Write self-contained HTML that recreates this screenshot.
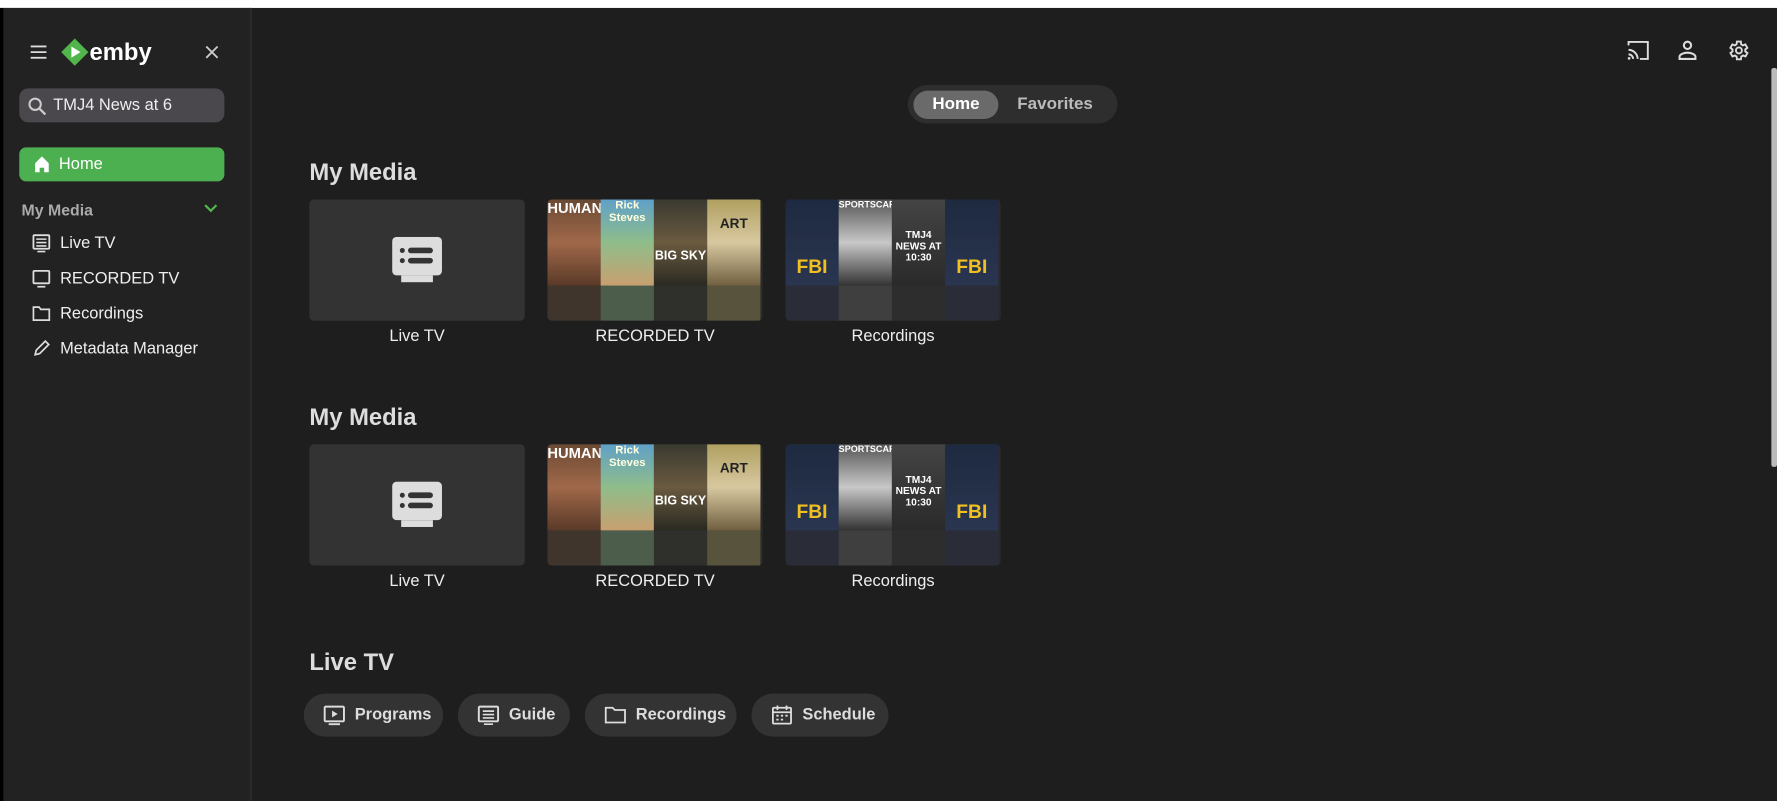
<!DOCTYPE html>
<html><head><meta charset="utf-8"><style>
*{box-sizing:border-box;margin:0;padding:0}
html,body{width:1777px;height:795px;overflow:hidden;background:#1e1e1e;font-family:"Liberation Sans",sans-serif;color:#eee}
#w{position:absolute;left:0;top:0;width:1568px;height:702px;transform:scale(1.1333);transform-origin:0 0;background:#1e1e1e}
.a{position:absolute}
.side{left:3px;top:7px;width:219px;height:700px;background:#222;border-right:1px solid #333}
.item{position:absolute;left:28px;font-size:14.5px;color:#eee;display:flex;align-items:center;gap:8px}
.item svg{width:17px;height:17px}
.card{position:absolute;width:190px;height:107px;border-radius:4px;background:#333;overflow:hidden}
.lbl{position:absolute;width:190px;text-align:center;font-size:14.5px;color:#eee}
h2{position:absolute;font-size:21px;font-weight:bold;color:#ddd}
.p{position:absolute;top:0;width:47px;height:76px;overflow:hidden;font-weight:bold;text-align:center}
.r{position:absolute;top:76px;width:47px;height:31px;opacity:.35}
.btn{position:absolute;top:612px;height:38px;border-radius:19px;background:#333;display:flex;align-items:center;gap:8px;padding-left:17px;font-size:14.5px;font-weight:bold;color:#ddd}
.btn svg{width:20px;height:20px}
</style></head><body><div id="w">
<div class="a" style="left:0;top:0;width:1568px;height:7px;background:#fff"></div>
<div class="a" style="left:0;top:7px;width:3px;height:700px;background:#000"></div>
<div class="a side"></div>
<div class="a" style="left:1563px;top:60px;width:5px;height:352px;background:#bbb;border-radius:2px"></div>
<svg class="a" style="left:27px;top:40px" width="14" height="12" viewBox="0 0 14 12"><path d="M0 1h14M0 6h14M0 11h14" stroke="#ddd" stroke-width="1.6"/></svg>
<svg class="a" style="left:53px;top:33px" width="26" height="26" viewBox="0 0 26 26"><path d="M13 1L25 13 13 25 1 13z" fill="#52b54b"/><path d="M10 8l8 5-8 5z" fill="#fff"/></svg>
<div class="a" style="left:79px;top:35px;font-size:21px;font-weight:bold;color:#fff">emby</div>
<svg class="a" style="left:181px;top:40px" width="12" height="12" viewBox="0 0 12 12"><path d="M1 1l10 10M11 1L1 11" stroke="#ccc" stroke-width="1.6"/></svg>
<div class="a" style="left:17px;top:78px;width:181px;height:30px;border-radius:8px;background:#4a474d"></div>
<svg class="a" style="left:24px;top:85px" width="17" height="17" viewBox="0 0 17 17"><circle cx="7" cy="7" r="5" stroke="#ccc" stroke-width="1.8" fill="none"/><path d="M11 11l5 5" stroke="#ccc" stroke-width="2"/></svg>
<div class="a" style="left:47px;top:85px;font-size:14.5px;color:#eee">TMJ4 News at 6</div>
<div class="a" style="left:17px;top:130px;width:181px;height:30px;border-radius:6px;background:#4caf50"></div>
<svg class="a" style="left:29px;top:137px" width="16" height="16" viewBox="0 0 16 16"><path d="M2 7L8 1l6 6v8h-4v-4H6v4H2z" fill="#fff"/></svg>
<div class="a" style="left:52px;top:137px;font-size:14.5px;color:#fff">Home</div>
<div class="a" style="left:19px;top:177px;font-size:14px;font-weight:bold;color:#aaa">My Media</div>
<svg class="a" style="left:180px;top:179px" width="12" height="9" viewBox="0 0 12 9"><path d="M1 2l5 5 5-5" stroke="#52b54b" stroke-width="2" fill="none"/></svg>
<div class="item" style="top:206px"><svg viewBox="0 0 17 17"><rect x="1.5" y="1.5" width="14" height="12" rx="1" stroke="#ddd" stroke-width="1.6" fill="none"/><path d="M4 5h9M4 8h9M4 11h9M5 16h7" stroke="#ddd" stroke-width="1.4"/></svg>Live TV</div>
<div class="item" style="top:237px"><svg viewBox="0 0 17 17"><rect x="1.5" y="2" width="14" height="11" rx="1" stroke="#ddd" stroke-width="1.6" fill="none"/><path d="M5 16h7" stroke="#ddd" stroke-width="1.6"/></svg>RECORDED TV</div>
<div class="item" style="top:268px"><svg viewBox="0 0 17 17"><path d="M1.5 3h5l1.5 2h7.5v9.5h-14z" stroke="#ddd" stroke-width="1.5" fill="none"/></svg>Recordings</div>
<div class="item" style="top:299px"><svg viewBox="0 0 17 17"><path d="M3 14l1-4 8-8 3 3-8 8z" stroke="#ddd" stroke-width="1.5" fill="none"/></svg>Metadata Manager</div>
<svg class="a" style="left:1435px;top:35px" width="21" height="19" viewBox="0 0 21 19"><path d="M2 5V2h17v15h-7M2 9a8 8 0 0 1 8 8M2 13a4 4 0 0 1 4 4" stroke="#ddd" stroke-width="1.7" fill="none"/><circle cx="2.5" cy="16.5" r="1.2" fill="#ddd"/></svg>
<svg class="a" style="left:1480px;top:35px" width="18" height="19" viewBox="0 0 18 19"><circle cx="9" cy="5" r="3.2" stroke="#ddd" stroke-width="1.8" fill="none"/><path d="M2 17v-2c0-2 4-3.5 7-3.5s7 1.5 7 3.5v2z" stroke="#ddd" stroke-width="1.8" fill="none"/></svg>
<svg class="a" style="left:1523px;top:34px" width="21" height="21" viewBox="0 0 24 24"><path d="M19.4 13a7.5 7.5 0 0 0 0-2l2.1-1.6-2-3.5-2.5 1a7 7 0 0 0-1.7-1L15 3h-4l-.4 2.9a7 7 0 0 0-1.7 1l-2.5-1-2 3.5L6.6 11a7.5 7.5 0 0 0 0 2l-2.1 1.6 2 3.5 2.5-1a7 7 0 0 0 1.7 1L11 21h4l.4-2.9a7 7 0 0 0 1.7-1l2.5 1 2-3.5z" fill="none" stroke="#ddd" stroke-width="1.9"/><circle cx="13" cy="12" r="3" fill="none" stroke="#ddd" stroke-width="1.9"/></svg>
<div class="a" style="left:801px;top:75px;width:185px;height:34px;border-radius:17px;background:#2e2e2e"></div>
<div class="a" style="left:806px;top:80px;width:75px;height:25px;border-radius:13px;background:#6a6a6a"></div>
<div class="a" style="left:806px;top:83px;width:75px;text-align:center;font-size:15px;font-weight:bold;color:#fff">Home</div>
<div class="a" style="left:886px;top:83px;width:90px;text-align:center;font-size:15px;font-weight:bold;color:#bbb">Favorites</div>

<h2 style="left:273px;top:141px">My Media</h2>
<h2 style="left:273px;top:357px">My Media</h2>
<h2 style="left:273px;top:573px">Live TV</h2>

<div class="card" style="left:273px;top:176px"><svg class="a" style="left:73px;top:33px" width="44" height="42" viewBox="0 0 44 42"><rect x="0" y="0" width="44" height="34" rx="4" fill="#ddd"/><rect x="8" y="34" width="28" height="6" fill="#ddd"/><circle cx="9" cy="12" r="2.2" fill="#333"/><circle cx="9" cy="21" r="2.2" fill="#333"/><rect x="14" y="9.5" width="22" height="5" rx="2.5" fill="#333"/><rect x="14" y="18.5" width="22" height="5" rx="2.5" fill="#333"/></svg></div>
<div class="card" style="left:483px;top:176px;background:#2a2a2a">
<div class="p" style="left:0;background:linear-gradient(#6b4a33,#a0684a 50%,#5a3a28);color:#fff;font-size:13px">HUMAN</div>
<div class="p" style="left:47px;background:linear-gradient(#5fa0c8,#8fbd8a 50%,#c8a070);color:#ffd;font-size:10px">Rick Steves</div>
<div class="p" style="left:94px;background:linear-gradient(#3a3a30,#6a5a40 50%,#2a2a22);color:#fff;font-size:11px;padding-top:44px">BIG SKY</div>
<div class="p" style="left:141px;background:linear-gradient(#b0a060,#d8c8a0 50%,#706040);color:#222;font-size:12px;padding-top:14px">ART</div>
<div class="r" style="left:0;background:#6b4a33"></div><div class="r" style="left:47px;background:#8fbd8a"></div><div class="r" style="left:94px;background:#3a3a30"></div><div class="r" style="left:141px;background:#b0a060"></div></div>
<div class="card" style="left:693px;top:176px;background:#2a2a2a">
<div class="p" style="left:0;background:linear-gradient(#1e2a40,#2a3550);color:#f0c020;font-size:17px;padding-top:50px">FBI</div>
<div class="p" style="left:47px;background:linear-gradient(#555,#c8c8c8 50%,#333);color:#fff;font-size:8px">SPORTSCAR</div>
<div class="p" style="left:94px;background:linear-gradient(#444,#2a2a2a);color:#fff;font-size:9px;padding-top:26px">TMJ4 NEWS AT 10:30</div>
<div class="p" style="left:141px;background:linear-gradient(#1e2a40,#2a3550);color:#f0c020;font-size:17px;padding-top:50px">FBI</div>
<div class="r" style="left:0;background:#2a3550"></div><div class="r" style="left:47px;background:#666"></div><div class="r" style="left:94px;background:#333"></div><div class="r" style="left:141px;background:#2a3550"></div></div>
<div class="lbl" style="left:273px;top:289px">Live TV</div>
<div class="lbl" style="left:483px;top:289px">RECORDED TV</div>
<div class="lbl" style="left:693px;top:289px">Recordings</div>

<div class="card" style="left:273px;top:392px"><svg class="a" style="left:73px;top:33px" width="44" height="42" viewBox="0 0 44 42"><rect x="0" y="0" width="44" height="34" rx="4" fill="#ddd"/><rect x="8" y="34" width="28" height="6" fill="#ddd"/><circle cx="9" cy="12" r="2.2" fill="#333"/><circle cx="9" cy="21" r="2.2" fill="#333"/><rect x="14" y="9.5" width="22" height="5" rx="2.5" fill="#333"/><rect x="14" y="18.5" width="22" height="5" rx="2.5" fill="#333"/></svg></div>
<div class="card" style="left:483px;top:392px;background:#2a2a2a">
<div class="p" style="left:0;background:linear-gradient(#6b4a33,#a0684a 50%,#5a3a28);color:#fff;font-size:13px">HUMAN</div>
<div class="p" style="left:47px;background:linear-gradient(#5fa0c8,#8fbd8a 50%,#c8a070);color:#ffd;font-size:10px">Rick Steves</div>
<div class="p" style="left:94px;background:linear-gradient(#3a3a30,#6a5a40 50%,#2a2a22);color:#fff;font-size:11px;padding-top:44px">BIG SKY</div>
<div class="p" style="left:141px;background:linear-gradient(#b0a060,#d8c8a0 50%,#706040);color:#222;font-size:12px;padding-top:14px">ART</div>
<div class="r" style="left:0;background:#6b4a33"></div><div class="r" style="left:47px;background:#8fbd8a"></div><div class="r" style="left:94px;background:#3a3a30"></div><div class="r" style="left:141px;background:#b0a060"></div></div>
<div class="card" style="left:693px;top:392px;background:#2a2a2a">
<div class="p" style="left:0;background:linear-gradient(#1e2a40,#2a3550);color:#f0c020;font-size:17px;padding-top:50px">FBI</div>
<div class="p" style="left:47px;background:linear-gradient(#555,#c8c8c8 50%,#333);color:#fff;font-size:8px">SPORTSCAR</div>
<div class="p" style="left:94px;background:linear-gradient(#444,#2a2a2a);color:#fff;font-size:9px;padding-top:26px">TMJ4 NEWS AT 10:30</div>
<div class="p" style="left:141px;background:linear-gradient(#1e2a40,#2a3550);color:#f0c020;font-size:17px;padding-top:50px">FBI</div>
<div class="r" style="left:0;background:#2a3550"></div><div class="r" style="left:47px;background:#666"></div><div class="r" style="left:94px;background:#333"></div><div class="r" style="left:141px;background:#2a3550"></div></div>
<div class="lbl" style="left:273px;top:505px">Live TV</div>
<div class="lbl" style="left:483px;top:505px">RECORDED TV</div>
<div class="lbl" style="left:693px;top:505px">Recordings</div>

<div class="btn" style="left:268px;width:123px"><svg viewBox="0 0 20 20"><rect x="1.5" y="2.5" width="17" height="13" rx="1" stroke="#ddd" stroke-width="1.7" fill="none"/><path d="M8 6l5 3-5 3z" fill="#ddd"/><path d="M5 18h10" stroke="#ddd" stroke-width="1.7"/></svg>Programs</div>
<div class="btn" style="left:404px;width:99px"><svg viewBox="0 0 20 20"><rect x="1.5" y="2.5" width="17" height="13" rx="1" stroke="#ddd" stroke-width="1.7" fill="none"/><path d="M5 6.5h10M5 9.5h10M5 12.5h10M6 18h8" stroke="#ddd" stroke-width="1.5"/></svg>Guide</div>
<div class="btn" style="left:516px;width:134px"><svg viewBox="0 0 20 20"><path d="M1.5 3.5h6l2 2h9v11h-17z" stroke="#ddd" stroke-width="1.6" fill="none"/></svg>Recordings</div>
<div class="btn" style="left:663px;width:121px"><svg viewBox="0 0 20 20"><rect x="2" y="3.5" width="16" height="14" rx="1" stroke="#ddd" stroke-width="1.6" fill="none"/><path d="M2 7.5h16M6 1.5v4M14 1.5v4M5 10.5h2M9 10.5h2M13 10.5h2M5 14h2M9 14h2" stroke="#ddd" stroke-width="1.6"/></svg>Schedule</div>
</div></body></html>
